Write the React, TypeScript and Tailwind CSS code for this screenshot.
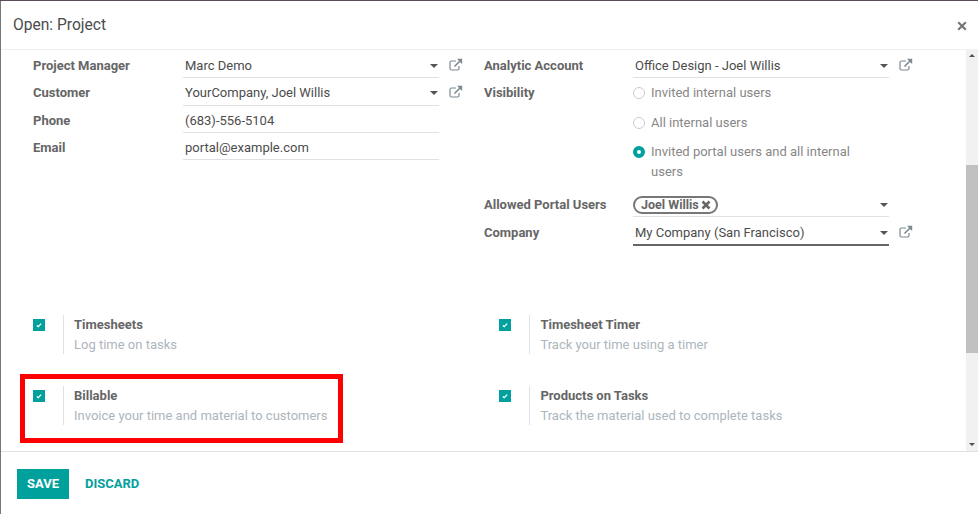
const label = "text-[13px] font-bold text-[#666666]";

function ExternalIcon() {
  return (
    <svg width="14" height="13" viewBox="0 0 14 13" fill="none" className="shrink-0">
      <path d="M7 3H2.5C1.7 3 1 3.7 1 4.5v6C1 11.3 1.7 12 2.5 12h6c.8 0 1.5-.7 1.5-1.5V8" stroke="#7d8a92" strokeWidth="1.2" />
      <path d="M5.5 8.5 11 3" stroke="#7d8a92" strokeWidth="1.6" />
      <path d="M8 .8h5.2V6L11.4 4.4 9.6 2.6Z" fill="#7d8a92" />
    </svg>
  );
}

function Caret() {
  return <span className="w-0 h-0 border-x-[4px] border-x-transparent border-t-[4px] border-t-[#555555]" />;
}

function Field({
  value,
  caret,
  link,
  focused,
  children,
}: {
  value?: string;
  caret?: boolean;
  link?: boolean;
  focused?: boolean;
  children?: React.ReactNode;
}) {
  const box = focused
    ? "h-[28.67px] pt-[4px] border-b-2 border-[#666666]"
    : children
      ? "h-[27.33px] pt-[5px] border-b border-[#dee2e6]"
      : "h-[27.33px] pt-[3px] border-b border-[#dee2e6]";
  return (
    <div className="flex items-center">
      <div className={`w-[256px] flex items-center justify-between pl-[2px] pr-[1px] ${box}`}>
        {children ?? <span className="text-[13px] text-[#4c4c4c]">{value}</span>}
        {caret && <Caret />}
      </div>
      {link && (
        <span className="ml-[10px]">
          <ExternalIcon />
        </span>
      )}
    </div>
  );
}

function FormRow({
  name,
  right,
  low,
  children,
}: {
  name: string;
  right?: boolean;
  low?: boolean;
  children: React.ReactNode;
}) {
  return (
    <div className="flex">
      <div className={`${label} ${right ? "w-[149px]" : "w-[150px]"} ${low ? "pt-[3px]" : "pt-[2px]"} leading-[25px] shrink-0`}>
        {name}
      </div>
      {children}
    </div>
  );
}

function Radio({ text, checked }: { text: React.ReactNode; checked?: boolean }) {
  return (
    <div className="flex text-[13px] leading-[20px] text-[#878787]">
      {checked ? (
        <span className="w-[12px] h-[12px] mt-[4px] mr-[6px] rounded-full border-[4px] border-[#00a09d] bg-white shrink-0" />
      ) : (
        <span className="w-[12px] h-[12px] mt-[4px] mr-[6px] rounded-full border border-[#c9ccd2] bg-white shrink-0" />
      )}
      <span>{text}</span>
    </div>
  );
}

function Setting({ title, desc }: { title: string; desc: string }) {
  return (
    <div className="flex w-[466.4px]">
      <div className="w-[30px] pt-[4px] shrink-0">
        <span className="w-[12px] h-[12px] bg-[#00a09d] flex items-center justify-center">
          <svg width="8" height="8" viewBox="0 0 8 8" fill="none">
            <path d="M1.8 4.4 3.2 5.6 6.2 2.6" stroke="#ffffff" strokeWidth="1.3" />
          </svg>
        </span>
      </div>
      <div className="h-[39px] border-l border-[#dee2e6] pl-[10px]">
        <div className={`${label} leading-[20px]`}>{title}</div>
        <div className="text-[13px] leading-[19px] text-[#adb5bd]">{desc}</div>
      </div>
    </div>
  );
}

export default function App() {
  return (
    <div
      className="w-[978px] h-[514px] flex flex-col bg-white overflow-hidden border-t border-[#5c4a58]"
      style={{ fontFamily: "Roboto, sans-serif" }}
    >
      <div className="flex flex-col flex-1 min-h-0 border-l border-[#777777]">
        <header className="h-[49px] flex items-center justify-between pl-[12px] pr-[10px] pt-[1px] border-b border-[#f0f0f0] shrink-0">
          <h1 className="text-[15.6px] text-[#4c4c4c]">Open: Project</h1>
          <svg width="10" height="10" viewBox="0 0 10 10" className="mr-[1px]">
            <path d="M1.2 1.2 8.8 8.8M8.8 1.2 1.2 8.8" stroke="#777777" strokeWidth="2.2" />
          </svg>
        </header>

        <div className="flex flex-1 min-h-0 border-b border-[#dee2e6]">
          <main className="flex-1 min-w-0 relative pl-[32px] pt-[1px]">
            <div className="flex h-[264px]">
              <div className="w-[451px] shrink-0">
                <FormRow name="Project Manager">
                  <Field value="Marc Demo" caret link />
                </FormRow>
                <FormRow name="Customer">
                  <Field value="YourCompany, Joel Willis" caret link />
                </FormRow>
                <FormRow name="Phone">
                  <Field value="(683)-556-5104" />
                </FormRow>
                <FormRow name="Email">
                  <Field value="portal@example.com" />
                </FormRow>
              </div>
              <div>
                <FormRow right name="Analytic Account">
                  <Field value="Office Design - Joel Willis" caret link />
                </FormRow>
                <FormRow right name="Visibility">
                  <div className="flex flex-col gap-[9.5px] pt-[5px] w-[230px]">
                    <Radio text="Invited internal users" />
                    <Radio text="All internal users" />
                    <Radio text="Invited portal users and all internal users" checked />
                  </div>
                </FormRow>
                <div className="h-[7px]" />
                <FormRow right low name="Allowed Portal Users">
                  <Field caret>
                    <span className="h-[18px] -ml-[2px] flex items-center gap-[2px] border-2 border-[#777777] rounded-full pl-[6px] pr-[5px] text-[12.5px] font-bold text-[#666666]">
                      Joel Willis
                      <svg width="10" height="10" viewBox="0 0 10 10">
                        <path d="M1.5 1.5 8.5 8.5M8.5 1.5 1.5 8.5" stroke="#666666" strokeWidth="2.6" />
                      </svg>
                    </span>
                  </Field>
                </FormRow>
                <FormRow right low name="Company">
                  <Field value="My Company (San Francisco)" caret link focused />
                </FormRow>
              </div>
            </div>

            <div className="flex flex-col gap-[32px]">
              <div className="flex">
                <Setting title="Timesheets" desc="Log time on tasks" />
                <Setting title="Timesheet Timer" desc="Track your time using a timer" />
              </div>
              <div className="flex">
                <Setting title="Billable" desc="Invoice your time and material to customers" />
                <Setting title="Products on Tasks" desc="Track the material used to complete tasks" />
              </div>
            </div>

            {/* red highlight drawn over the screenshot */}
            <div className="absolute left-[19px] top-[324px] w-[323px] h-[69px] border-[5px] border-[#ff0000]" />
          </main>

          <div className="w-[12px] shrink-0 bg-[#f1f1f1] flex flex-col items-center">
            <span className="mt-[4px] w-0 h-0 border-x-[3px] border-x-transparent border-b-[3px] border-b-[#505050]" />
            <div className="w-full h-[188px] mt-[108px] bg-[#c1c1c1]" />
            <span className="mt-auto mb-[5px] w-0 h-0 border-x-[3px] border-x-transparent border-t-[3px] border-t-[#505050]" />
          </div>
        </div>

        <footer className="h-[62px] shrink-0 flex items-center pl-[16px] pt-[2px]">
          <button className="h-[30px] w-[52px] bg-[#00a09d] text-white text-[13px] font-bold">SAVE</button>
          <button className="ml-[16px] text-[13px] font-bold text-[#00a09d]">DISCARD</button>
        </footer>
      </div>
    </div>
  );
}
